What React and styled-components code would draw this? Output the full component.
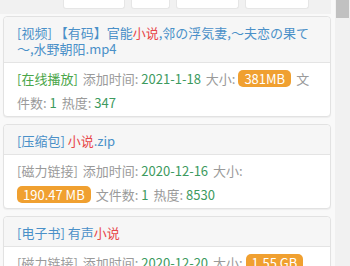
import React from "react";
import styled, { createGlobalStyle } from "styled-components";

const GlobalStyle = createGlobalStyle`
  html, body { margin: 0; padding: 0; background: #f9f9f9; overflow: hidden; }
  body { font-family: "Noto Sans CJK SC", "Liberation Sans", sans-serif; }
`;

const Page = styled.div`
  display: flex;
  width: 350px;
  height: 266px;
  overflow: hidden;
`;

const Main = styled.div`
  flex: 1;
  display: flex;
  flex-direction: column;
  min-width: 0;
`;

const TopBar = styled.div`
  height: 14px;
  background: #f1f1f1;
  display: flex;
  align-items: flex-start;
  padding-left: 63px;
  gap: 6px;
  margin-right: 4px;
  margin-bottom: 2px;
  flex-shrink: 0;
`;

const TopBtn = styled.div`
  width: ${(p) => p.w}px;
  height: 8px;
  background: #fff;
  border: 1px solid #e6e6e6;
  border-top: none;
  border-radius: 0 0 3px 3px;
`;

const List = styled.div`
  display: flex;
  flex-direction: column;
  gap: 7px;
  padding: 0 4px 0 3px;
`;

const Card = styled.div`
  background: #fff;
  border: 1px solid #e2e2e2;
  border-radius: 4px;
  box-shadow: 0 1px 1px rgba(0, 0, 0, 0.05);
  flex-shrink: 0;
`;

const Heading = styled.div`
  background: #f6f6f6;
  border-bottom: 1px solid #e4e4e4;
  border-radius: 4px 4px 0 0;
  padding: 8px 15px 5px 13px;
  font-size: 13px;
  line-height: 16px;
  color: #4a90c8;
`;

const Hot = styled.span`
  color: #e8474a;
`;

const Body = styled.div`
  padding: 4px 15px 1px 13px;
  font-size: 13px;
  line-height: 24px;
  color: #9a9a9a;
`;

const Tag = styled.span`
  color: ${(p) => (p.green ? "#4aa64a" : "#9a9a9a")};
  margin-right: 5px;
`;

const Val = styled.span`
  color: #3d9a5e;
  margin-right: 5px;
`;

const Badge = styled.span`
  display: inline-block;
  background: #f0a030;
  color: #fff;
  font-size: 13px;
  line-height: 17px;
  padding: 0 6px;
  border-radius: 5px;
  margin-right: 5px;
`;

const Scrollbar = styled.div`
  width: 15px;
  background: #f1f1f1;
  display: flex;
  justify-content: center;
  flex-shrink: 0;
`;

const Thumb = styled.div`
  width: 13px;
  height: 18px;
  background: #c1c1c1;
`;

const items = [
  {
    head: (
      <>
        [视频] 【有码】官能<Hot>小说</Hot>,邻の浮気妻,～夫恋の果て～,水野朝阳.mp4
      </>
    ),
    tag: "[在线播放]",
    green: true,
    date: "2021-1-18",
    size: "381MB",
    files: "1",
    hot: "347",
  },
  {
    head: (
      <>
        [压缩包] <Hot>小说</Hot>.zip
      </>
    ),
    tag: "[磁力链接]",
    date: "2020-12-16",
    size: "190.47 MB",
    files: "1",
    hot: "8530",
  },
  {
    head: (
      <>
        [电子书] 有声<Hot>小说</Hot>
      </>
    ),
    tag: "[磁力链接]",
    date: "2020-12-20",
    size: "1.55 GB",
    files: "3",
    hot: "1200",
  },
];

export default function App() {
  return (
    <>
      <GlobalStyle />
      <Page>
        <Main>
          <TopBar>
            <TopBtn w={60} />
            <TopBtn w={37} />
            <TopBtn w={61} />
            <TopBtn w={62} />
          </TopBar>
          <List>
            {items.map((it, i) => (
              <Card key={i}>
                <Heading>{it.head}</Heading>
                <Body>
                  <Tag green={it.green}>{it.tag}</Tag>
                  添加时间: <Val>{it.date}</Val>
                  大小: <Badge>{it.size}</Badge>
                  文件数: <Val>{it.files}</Val>
                  热度: <Val>{it.hot}</Val>
                </Body>
              </Card>
            ))}
          </List>
        </Main>
        <Scrollbar>
          <Thumb />
        </Scrollbar>
      </Page>
    </>
  );
}
